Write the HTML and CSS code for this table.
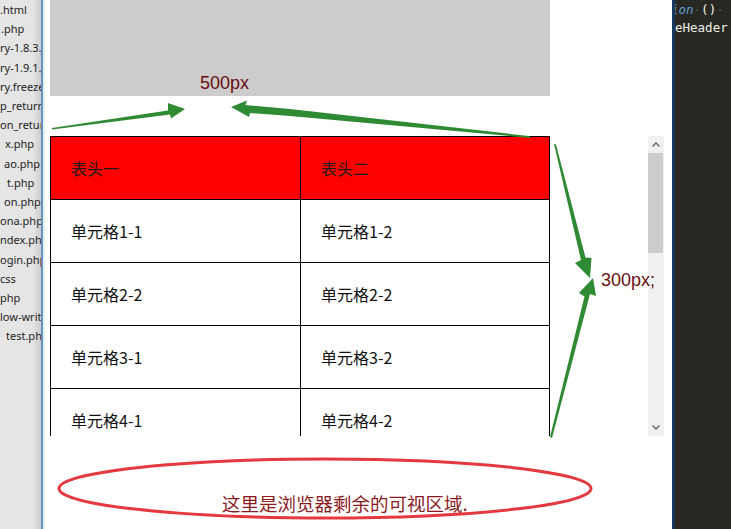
FILE: index.html
```html
<!DOCTYPE html>
<html lang="zh-CN">
<head>
<meta charset="utf-8">
<title>固定表头</title>
<link rel="stylesheet" href="styles.css">
</head>
<body>
<div class="screen">
  <aside class="files">
    <div class="file">.html</div>
    <div class="file in1">.php</div>
    <div class="file">ry-1.8.3.js</div>
    <div class="file">ry-1.9.1.js</div>
    <div class="file">ry.freezeheader.js</div>
    <div class="file">p_return.php</div>
    <div class="file">on_return.php</div>
    <div class="file in5">x.php</div>
    <div class="file in4">ao.php</div>
    <div class="file in7">t.php</div>
    <div class="file in4">on.php</div>
    <div class="file">ona.php</div>
    <div class="file">ndex.php</div>
    <div class="file">ogin.php</div>
    <div class="file">css</div>
    <div class="file">php</div>
    <div class="file">low-write.php</div>
    <div class="file in6">test.php</div>
  </aside>

  <main class="page">
    <div class="gray-box"></div>
    <div class="scroll-row">
      <div class="table-wrap">
        <table class="grid">
          <thead>
            <tr><th class="first">表头一</th><th>表头二</th></tr>
          </thead>
          <tbody>
            <tr><td>单元格1-1</td><td>单元格1-2</td></tr>
            <tr><td>单元格2-2</td><td>单元格2-2</td></tr>
            <tr><td>单元格3-1</td><td>单元格3-2</td></tr>
            <tr><td>单元格4-1</td><td>单元格4-2</td></tr>
          </tbody>
        </table>
      </div>
      <div class="scrollbar">
        <span class="sb-btn"><svg width="16" height="17" viewBox="0 0 16 17"><path d="M4.5 10.5 L8 7 L11.5 10.5" fill="none" stroke="#606060" stroke-width="1.3"/></svg></span>
        <span class="sb-thumb"></span>
        <span class="sb-track"></span>
        <span class="sb-btn"><svg width="16" height="17" viewBox="0 0 16 17"><path d="M4.5 6.5 L8 10 L11.5 6.5" fill="none" stroke="#606060" stroke-width="1.3"/></svg></span>
      </div>
    </div>
    <p class="note">这里是浏览器剩余的可视区域.</p>
  </main>

  <section class="editor">
    <div class="code-line first-line"><span class="kw">ion</span><span class="ws">·</span>()<span class="ws">·</span></div>
    <div class="code-line">eHeader<span class="ws">·</span></div>
  </section>

  <svg class="marks" width="731" height="529" viewBox="0 0 731 529">
    <g fill="#2f8a34">
      <polygon points="52,128 168,110.5 168,103 185,109 171,118.5 170,114.5 52,129.5"/>
      <polygon points="231,107 247,100.5 245.5,105 290,109 529,136 531,138 290,116 250,113 249,117"/>
      <polygon points="554,144 556,144.5 585.5,257.5 591.5,258 590,278 575,263 581,260"/>
      <polygon points="593,278 596,296 590,294 552,438 550,437 584.5,296.5 579,293"/>
    </g>
    <ellipse cx="325" cy="488.5" rx="266" ry="29.5" fill="none" stroke="#e3393f" stroke-width="3"/>
  </svg>
  <span class="label label-500">500px</span>
  <span class="label label-300">300px;</span>
</div>
</body>
</html>
```

FILE: styles.css
```css
html, body {
  margin: 0;
  padding: 0;
  background: #fff;
}

.screen {
  position: relative;
  display: flex;
  width: 731px;
  height: 529px;
  overflow: hidden;
}

/* left file tree (cut off) */
.files {
  flex: none;
  width: 41px;
  height: 100%;
  overflow: hidden;
  background: linear-gradient(to right, #e6e6e6 0, #e4e4e4 33px, #cdcdcd 41px);
  border-right: 2px solid #6a90c2;
  font-family: "Noto Sans", "Open Sans", sans-serif;
  font-size: 11px;
  line-height: 19.2px;
  color: #1c1c1c;
}

.file {
  white-space: nowrap;
}

.in1 { padding-left: 1px; }
.in4 { padding-left: 4px; }
.in5 { padding-left: 5px; }
.in6 { padding-left: 6px; }
.in7 { padding-left: 7px; }

/* page in the browser */
.page {
  flex: none;
  width: 629px;
  height: 100%;
  box-sizing: border-box;
  border-left: 2px solid #e0f5f7;
  padding-left: 5px;
  background: #fff;
}

.gray-box {
  width: 500px;
  height: 96px;
  background: #cccccc;
}

.scroll-row {
  display: flex;
  margin-top: 40px;
  height: 300px;
}

.table-wrap {
  flex: none;
  width: 500px;
  height: 300px;
  overflow: hidden;
}

.grid {
  width: 500px;
  table-layout: fixed;
  border-collapse: separate;
  border-spacing: 0;
  border-top: 1px solid #000;
  border-left: 1px solid #000;
  font-family: "Noto Sans CJK SC", "Liberation Sans", sans-serif;
  font-size: 16px;
  color: #111;
}

.grid th,
.grid td {
  height: 62px;
  padding: 0 0 0 20px;
  border-right: 1px solid #000;
  border-bottom: 1px solid #000;
  text-align: left;
  vertical-align: middle;
  font-weight: normal;
  white-space: nowrap;
}

.grid th {
  background: #ff0000;
  color: #1a1a1a;
}

.grid th.first {
  width: 229px;
}

.scrollbar {
  flex: none;
  display: flex;
  flex-direction: column;
  width: 16px;
  height: 300px;
  margin-left: 98px;
  background: #f0f0f0;
}

.sb-btn {
  display: block;
  height: 17px;
  flex: none;
}

.sb-btn svg {
  display: block;
}

.sb-thumb {
  display: block;
  flex: none;
  height: 100px;
  margin-right: 1px;
  background: #cdcdcd;
}

.sb-track {
  display: block;
  flex: 1;
}

.note {
  margin: 55px 0 0 172px;
  font-family: "Noto Sans CJK SC", sans-serif;
  font-size: 18.5px;
  line-height: 24px;
  color: #8a1a1e;
  white-space: nowrap;
}

/* code editor strip */
.editor {
  flex: 1;
  height: 100%;
  overflow: hidden;
  border-left: 3px solid #19385d;
  background: linear-gradient(to right, #2c2821 0, #2c2821 5px, #272822 5px);
  font-family: "DejaVu Sans Mono", monospace;
  font-size: 12.5px;
  line-height: 18px;
  color: #f0f0ea;
  padding-top: 1px;
}

.code-line {
  white-space: pre;
}

.first-line {
  text-indent: -4px;
}

.kw {
  font-style: italic;
  color: #5f9fd2;
}

.ws {
  color: #5a5a50;
}

/* annotations drawn over the page */
.marks {
  position: absolute;
  left: 0;
  top: 0;
  pointer-events: none;
}

.label {
  position: absolute;
  font-family: "Liberation Sans", Arial, sans-serif;
  font-size: 18px;
  line-height: 20px;
  color: #6a0d10;
  white-space: nowrap;
}

.label-500 {
  left: 200px;
  top: 73px;
}

.label-300 {
  left: 601px;
  top: 270px;
}
```
